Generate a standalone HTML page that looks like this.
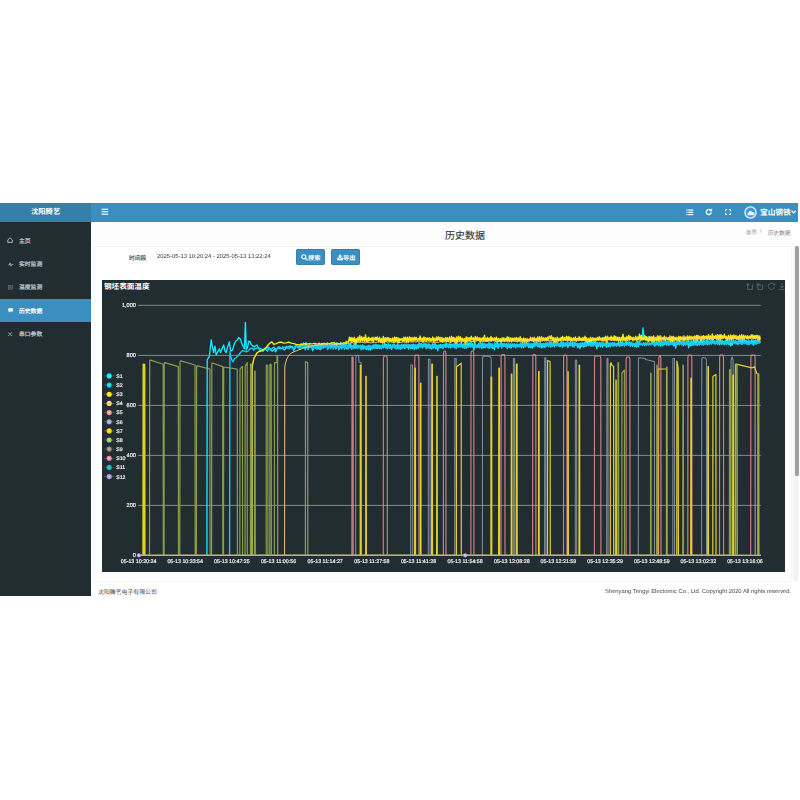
<!DOCTYPE html><html lang="zh"><head><meta charset="utf-8"><title>历史数据</title><style>
*{box-sizing:border-box}
html,body{margin:0;padding:0}
body{width:800px;height:800px;background:#fff;overflow:hidden;position:relative;font-family:"Liberation Sans",sans-serif;color:#333;text-rendering:geometricPrecision}
.abs{position:absolute}
.cj{position:absolute;overflow:visible;line-height:1}
.cj svg{position:absolute;left:0;top:0;overflow:visible}
.cj text{font-family:"Liberation Sans","Noto Sans CJK SC",sans-serif;text-rendering:geometricPrecision}
.logo{left:0;top:203.1px;width:90.8px;height:18.7px;background:#367fa9}
.nav{left:90.8px;top:203.1px;width:707.6px;height:18.7px;background:#3b8ec0}
.side{left:0;top:221.8px;width:90.8px;height:374.4px;background:#222d32}
.act{left:0;top:299.1px;width:90.8px;height:22.6px;background:#3b8ec0}
.content{left:90.8px;top:221.8px;width:709.2px;height:374.4px;background:#fff}
.hdr{left:91px;top:221.8px;width:701px;height:22.2px;background:#fdfdfd}
.box{left:93.5px;top:245.6px;width:698.9px;height:336px;background:#fff;border:1px solid #f7f5f4;border-radius:1px}
.chart{left:102px;top:280px;width:683px;height:292px;background:#222d32}
.btn{top:249.4px;height:15.8px;width:28.7px;background:#3b8ec0;border:0.5px solid #367fa9;border-radius:1.3px}
.lbl{will-change:transform;font-size:5.85px;line-height:8px;white-space:nowrap;color:#333}
.track{left:792px;top:245.6px;width:6.4px;height:335.6px;background:linear-gradient(90deg,#fff,#f3f3f3 40%,#f1f1f1)}
.thumb{left:795.3px;top:246.4px;width:3.3px;height:229.6px;background:#a0a0a0;border-radius:1.6px}
.foot{will-change:transform;font-size:5.83px;line-height:8px;color:#444;white-space:nowrap}
.ax{text-rendering:geometricPrecision;font-size:5.2px;fill:#f4f4f4;stroke:#f4f4f4;stroke-width:0.18px;font-family:"Liberation Sans",sans-serif}
.axx{font-size:5.3px}
.axy{font-size:5.6px}
</style></head><body>
<div class="abs logo"></div><div class="abs nav"></div>
<div class="cj" style="left:30.7px;top:207.3px;width:29.2px;height:9.5px;font-size:7.3px"><svg width="29.2" height="9.5" viewBox="0 0 29.2 9.5"><text x="0" y="7.4" font-size="7.3" font-weight="bold" fill="#fff">沈阳腾艺</text></svg></div>
<svg class="abs" style="left:101px;top:208px" width="8" height="8" viewBox="0 0 8 8"><g fill="#fff"><rect x="0.6" y="0.7" width="6.6" height="1.15"/><rect x="0.6" y="3.15" width="6.6" height="1.15"/><rect x="0.6" y="5.6" width="6.6" height="1.15"/></g></svg>
<svg class="abs" style="left:685.6px;top:208.6px" width="8" height="7" viewBox="0 0 8 7"><g fill="#fff"><rect x="0.3" y="0.4" width="1.2" height="1.2"/><rect x="2.2" y="0.4" width="5" height="1.2"/><rect x="0.3" y="2.7" width="1.2" height="1.2"/><rect x="2.2" y="2.7" width="5" height="1.2"/><rect x="0.3" y="5" width="1.2" height="1.2"/><rect x="2.2" y="5" width="5" height="1.2"/></g></svg>
<svg class="abs" style="left:705px;top:208.4px" width="8" height="8" viewBox="0 0 8 8"><path d="M6.3 4.3A2.5 2.5 0 1 1 5.4 2.1" fill="none" stroke="#fff" stroke-width="1.35"/><path d="M7.1 0.3V3.3H4.1Z" fill="#fff"/></svg>
<svg class="abs" style="left:724.9px;top:208.9px" width="6.2" height="6.2" viewBox="0 0 7 7"><g fill="#fff"><path d="M0.2 0.2H3L0.2 3Z"/><path d="M6.8 0.2V3L4 0.2Z"/><path d="M0.2 6.8V4L3 6.8Z"/><path d="M6.8 6.8H4L6.8 4Z"/></g></svg>
<svg class="abs" style="left:743.7px;top:205.5px" width="13" height="13" viewBox="0 0 13 13"><circle cx="6.5" cy="6.5" r="6.2" fill="#eaf4fb"/><circle cx="6.5" cy="6.5" r="4.9" fill="#3f9be0"/><path d="M4.3 9.3a1.4 1.4 0 0 1 .2-2.7a1.9 1.9 0 0 1 3.6-.4a1.6 1.6 0 0 1 1.3 3.1Z" fill="#fff"/><rect x="5.6" y="7.6" width="2" height="0.7" rx="0.35" fill="#8cc4ee"/></svg>
<div class="cj" style="left:759.6px;top:206.7px;width:30.8px;height:10px;font-size:7.7px"><svg width="30.8" height="10" viewBox="0 0 30.8 10"><text x="0" y="7.8" font-size="7.7" font-weight="bold" fill="#fff">宝山钢铁</text></svg></div>
<svg class="abs" style="left:791.3px;top:210px" width="5.4" height="4" viewBox="0 0 5.4 4"><path d="M0.5 0.6L2.7 2.9L4.9 0.6" fill="none" stroke="#fff" stroke-width="1.15"/></svg>
<div class="abs side"></div><div class="abs act"></div>
<svg class="abs" style="left:7.4px;top:237.2px" width="6.2" height="6.2" viewBox="0 0 6.2 6.2"><path d="M0.8 2.9L3.1 0.8L5.4 2.9V5.4H0.8Z" fill="none" stroke="#b8c7ce" stroke-width="0.9" stroke-linejoin="round"/></svg>
<svg class="abs" style="left:8.2px;top:261.6px" width="5.4" height="5" viewBox="0 0 5.4 5"><path d="M0.2 3H1.3L2.1 0.9L3 4.2L3.7 2.4H5.2" fill="none" stroke="#b8c7ce" stroke-width="0.7"/></svg>
<svg class="abs" style="left:7.8px;top:285px" width="5" height="4.6" viewBox="0 0 5 4.6"><g fill="none" stroke="#6f8089" stroke-width="0.55"><rect x="0.4" y="0.4" width="4.2" height="3.8"/><path d="M0.4 1.7H4.6M0.4 3H4.6M1.9 1.7V4.2"/></g></svg>
<svg class="abs" style="left:7.9px;top:308.4px" width="5.6" height="4.6" viewBox="0 0 5.6 4.6"><path d="M0.9 0.3H4.7a0.7 0.7 0 0 1 .7 .7V2.7a0.7 0.7 0 0 1 -.7 .7H2.3L1.2 4.4V3.4H0.9a0.7 0.7 0 0 1 -.7 -.7V1a0.7 0.7 0 0 1 .7 -.7Z" fill="#fff"/></svg>
<svg class="abs" style="left:8.4px;top:331.6px" width="4.6" height="4.4" viewBox="0 0 4.6 4.4"><path d="M0.2 0.9H1.1L3 3.5H4.3M0.2 3.5H1.1L3 0.9H4.3" fill="none" stroke="#b8c7ce" stroke-width="0.6"/></svg>
<div class="cj" style="left:19px;top:236.5px;width:11.7px;height:7.6px;font-size:5.8px"><svg width="11.7" height="7.6" viewBox="0 0 11.7 7.6"><text x="0" y="5.9" font-size="5.8" fill="#b8c7ce" stroke="#b8c7ce" stroke-width="0.22">主页</text></svg></div>
<div class="cj" style="left:19px;top:260px;width:23.4px;height:7.6px;font-size:5.8px"><svg width="23.4" height="7.6" viewBox="0 0 23.4 7.6"><text x="0" y="5.9" font-size="5.8" fill="#b8c7ce" stroke="#b8c7ce" stroke-width="0.22">实时监测</text></svg></div>
<div class="cj" style="left:19px;top:283.4px;width:23.4px;height:7.6px;font-size:5.8px"><svg width="23.4" height="7.6" viewBox="0 0 23.4 7.6"><text x="0" y="5.9" font-size="5.8" fill="#b8c7ce" stroke="#b8c7ce" stroke-width="0.22">温度监测</text></svg></div>
<div class="cj" style="left:19px;top:307px;width:23.4px;height:7.6px;font-size:5.8px"><svg width="23.4" height="7.6" viewBox="0 0 23.4 7.6"><text x="0" y="5.9" font-size="5.8" fill="#fff" stroke="#fff" stroke-width="0.22">历史数据</text></svg></div>
<div class="cj" style="left:19px;top:330.2px;width:23.4px;height:7.6px;font-size:5.8px"><svg width="23.4" height="7.6" viewBox="0 0 23.4 7.6"><text x="0" y="5.9" font-size="5.8" fill="#b8c7ce" stroke="#b8c7ce" stroke-width="0.22">串口参数</text></svg></div>
<div class="abs content"></div><div class="abs hdr"></div>
<div class="cj" style="left:445.1px;top:228.5px;width:40px;height:13px;font-size:10px"><svg width="40" height="13" viewBox="0 0 40 13"><text x="0" y="10.1" font-size="10" fill="#333" stroke="#333" stroke-width="0.12">历史数据</text></svg></div>
<div class="cj" style="left:745.8px;top:228.6px;width:10.8px;height:7px;font-size:5.4px"><svg width="10.8" height="7" viewBox="0 0 10.8 7"><text x="0" y="5.5" font-size="5.4" fill="#999">首页</text></svg></div>
<div class="abs" style="left:760.4px;top:228.3px;font-size:5.4px;line-height:8px;color:#aaa;will-change:transform">/</div>
<div class="cj" style="left:767.6px;top:228.5px;width:22.4px;height:7.3px;font-size:5.6px"><svg width="22.4" height="7.3" viewBox="0 0 22.4 7.3"><text x="0" y="5.7" font-size="5.6" fill="#777">历史数据</text></svg></div>
<div class="abs box"></div>
<div class="cj" style="left:128.5px;top:253.6px;width:17.5px;height:7.6px;font-size:5.8px"><svg width="17.5" height="7.6" viewBox="0 0 17.5 7.6"><text x="0" y="5.9" font-size="5.8" fill="#333" stroke="#333" stroke-width="0.1">时间段</text></svg></div>
<div class="abs lbl" style="left:156.5px;top:253.4px">2025-05-13 10:20:24 - 2025-05-13 13:22:24</div>
<div class="abs btn" style="left:295.9px"></div><div class="abs btn" style="left:331.1px"></div>
<svg class="abs" style="left:300.8px;top:253.8px" width="7" height="7" viewBox="0 0 7 7"><circle cx="2.8" cy="2.8" r="2" fill="none" stroke="#fff" stroke-width="1.15"/><path d="M4.3 4.3L6.4 6.4" stroke="#fff" stroke-width="1.3"/></svg>
<div class="cj" style="left:308px;top:253.5px;width:12.4px;height:8.1px;font-size:6.2px"><svg width="12.4" height="8.1" viewBox="0 0 12.4 8.1"><text x="0" y="6.3" font-size="6.2" font-weight="bold" fill="#fff">搜索</text></svg></div>
<svg class="abs" style="left:336.8px;top:254.2px" width="6.4" height="6.6" viewBox="0 0 6.4 6.6"><path d="M1.3 2.6L3.2 0.3L5.1 2.6H4.1V4H2.3V2.6Z" fill="#fff"/><path d="M0.3 3.6H1.7V4.6H4.7V3.6H6.1V6.2H0.3Z" fill="#fff"/></svg>
<div class="cj" style="left:343.4px;top:253.5px;width:12.4px;height:8.1px;font-size:6.2px"><svg width="12.4" height="8.1" viewBox="0 0 12.4 8.1"><text x="0" y="6.3" font-size="6.2" font-weight="bold" fill="#fff">导出</text></svg></div>
<div class="abs track"></div><div class="abs thumb"></div>
<div class="abs chart"></div>
<div class="cj" style="left:103.5px;top:280.6px;width:45.6px;height:9.9px;font-size:7.6px"><svg width="45.6" height="9.9" viewBox="0 0 45.6 9.9"><text x="0" y="7.7" font-size="7.6" font-weight="bold" fill="#fff">钢坯表面温度</text></svg></div>
<svg class="abs" style="left:102px;top:280px;will-change:transform" width="683" height="292" viewBox="102 280 683 292"><path d="M138.2 305.3H760.8" stroke="#a2a9ac" stroke-width="0.75"/><path d="M138.2 355.4H760.8" stroke="#a2a9ac" stroke-width="0.75"/><path d="M138.2 405.4H760.8" stroke="#a2a9ac" stroke-width="0.75"/><path d="M138.2 455.4H760.8" stroke="#a2a9ac" stroke-width="0.75"/><path d="M138.2 505.4H760.8" stroke="#a2a9ac" stroke-width="0.75"/><path d="M138.2 555.4H760.8" stroke="#a2a9ac" stroke-width="0.75"/><text class="ax axy" x="135.9" y="307.2" text-anchor="end">1,000</text><text class="ax axy" x="135.9" y="357.3" text-anchor="end">800</text><text class="ax axy" x="135.9" y="407.3" text-anchor="end">600</text><text class="ax axy" x="135.9" y="457.3" text-anchor="end">400</text><text class="ax axy" x="135.9" y="507.3" text-anchor="end">200</text><text class="ax axy" x="135.9" y="557.3" text-anchor="end">0</text><text class="ax axx" x="138.6" y="563.3" text-anchor="middle">05-13 10:20:24</text><text class="ax axx" x="185.2" y="563.3" text-anchor="middle">05-13 10:33:54</text><text class="ax axx" x="231.9" y="563.3" text-anchor="middle">05-13 10:47:25</text><text class="ax axx" x="278.5" y="563.3" text-anchor="middle">05-13 11:00:56</text><text class="ax axx" x="325.2" y="563.3" text-anchor="middle">05-13 11:14:27</text><text class="ax axx" x="371.9" y="563.3" text-anchor="middle">05-13 11:27:58</text><text class="ax axx" x="418.5" y="563.3" text-anchor="middle">05-13 11:41:28</text><text class="ax axx" x="465.1" y="563.3" text-anchor="middle">05-13 11:54:58</text><text class="ax axx" x="511.8" y="563.3" text-anchor="middle">05-13 12:08:28</text><text class="ax axx" x="558.4" y="563.3" text-anchor="middle">05-13 12:21:59</text><text class="ax axx" x="605.1" y="563.3" text-anchor="middle">05-13 12:35:29</text><text class="ax axx" x="651.8" y="563.3" text-anchor="middle">05-13 12:48:59</text><text class="ax axx" x="698.4" y="563.3" text-anchor="middle">05-13 13:02:32</text><text class="ax axx" x="745" y="563.3" text-anchor="middle">05-13 13:16:06</text><polyline fill="none" stroke="#18E6FF" stroke-width="1.35" stroke-linejoin="round" points="206.9,555.4 207.2,360 208.3,358 209.4,356.5 211.2,339.8 212.5,347.5 213.7,352.5 215,346.2 216.2,355 218.1,351.2 219.4,348.7 220.6,352.5 222.5,347.5 223.7,345 225,351.2 226.2,352.5 227.5,347.5 229.4,341.9 230.6,351.2 232.5,350 234.4,343.7 235.6,341.2 237.5,340 238.7,337.5 240.6,339.4 241.9,343.7 243.1,346.2 244.4,348.7 245.4,322.3 246.3,350 247.5,347.5 248.7,341.2 250,341.9 251.2,344.4 253.1,346.2 255,346.2 256.9,345 258.7,348.7 260,351.2 261.2,349 262.1,350.3 263,351.3 263.9,349.9 264.8,348.5 265.7,349.4 266.6,350.2 267.5,351.1 268.4,348.7 269.3,347.8 270.2,349.8 271.1,350 272,351.2 272.9,350.9 273.8,349.6 274.7,348.9 275.6,351.9 276.5,349.5 277.4,348.2 278.3,347.3 279.2,348.4 280.1,348.8 281,348.3 281.9,348.4 282.8,348.7 283.7,349.3 284.6,349.8 285.5,348.9 286.4,346.3 287.3,348.2 288.2,346.3 289.1,347.1 290,345.8 290.9,346.9 291.8,346.3 292.7,347.2 293.6,350.8 294.5,348 295.4,348.1 296.3,345.6 297.2,345.9 298.1,347 299,346.4 300,347.1 301,343.6 302.1,346.4 303.5,343 304.7,347.7 306,342.6 307.4,348.8 308.7,345.1 309.8,347.6 311.3,345.8 312.6,350.7 314,345.9 315.5,348.3 316.5,345.7 318.1,349.1 319.4,345.1 320.9,349.7 322.1,343.5 323.2,348.2 324.3,343.3 325.6,347.4 327,343.1 328.5,348.4 329.8,343.8 331,347.3 332,343.3 333.3,349.1 334.5,342.2 335.7,348.8 337.2,342.8 338.8,349.8 339.8,346.1 341.1,348 342.4,343.8 343.7,347.4 345.2,343.1 346.3,348.5 348,348.6 349,344.1 349.9,347 350.7,343.2 351.5,349 352.3,345.9 353.1,347.7 354,344.4 355,348.3 356.2,343.6 357.2,348.9 358.2,345.1 359.1,348.1 360.2,345.2 361.2,349.8 361.9,345.9 363,349.3 364.1,346.3 365,348.7 365.8,346.2 366.7,349.7 367.5,346.2 368.5,349.7 369.6,347.2 370.3,350 371.2,346.8 372.2,349 373.3,344.8 374.1,348.4 375.2,344.3 376,348.5 376.9,344.7 377.7,348.3 378.7,345 379.6,348.5 380.5,346.4 381.4,348.7 382.5,344.7 383.5,347.8 384.6,342.1 385.6,347.9 386.3,344.5 387.4,348.9 388.3,343.7 389.4,348.2 390.4,344.3 391.4,349.3 392.5,345 393.4,347 394.2,344.2 395.1,348.3 395.9,345.1 396.9,348.8 397.9,343.5 398.9,348.9 400,345 400.8,349.4 401.9,344.2 402.7,348 403.7,344.8 404.8,348.6 405.9,345.9 406.8,347.4 407.8,346.1 408.6,349.1 409.6,344.7 410.8,348.6 411.5,344.7 412.3,348.7 413.3,344.2 414.4,349.5 415.2,344.8 416.3,348.9 417.4,344.7 418.3,348.5 419.1,343 420.2,346.8 421.3,343.7 422.3,348.1 423.3,344 424.2,346 425.1,343.1 426.1,348.7 427,343.9 428,348.2 428.9,343.8 430,348.5 431,345 431.9,349.1 432.8,343.6 433.8,348 434.9,343.2 435.8,348.7 436.8,344.9 437.8,350.7 438.6,345 439.5,347 440.3,344.4 441.1,347.6 442.1,344.7 443.1,348.3 444.2,344.1 445.3,347.2 446.1,342.6 446.9,347 448,344.4 448.8,346.6 449.8,343.3 450.6,347.4 451.4,344.5 452.2,347.2 453,343.9 454.2,346.4 455.1,343 456.1,348.7 457.1,342.6 458,346.5 459,344.2 460,347.1 461,342.6 462.1,347 463.2,343.8 464.3,347.8 465.3,343.9 466.2,347.5 467.1,342.5 468,347.1 469.1,342.7 470.2,347.2 471,342.3 471.8,346.5 472.8,343.4 473.8,350.1 474.8,341.6 475.9,347.1 476.9,345.2 477.8,347.2 478.8,343.5 479.8,347.8 480.7,343.2 481.8,348.5 482.6,342.7 483.5,347.6 484.5,343.8 485.6,347.6 486.4,344.4 487.2,346.8 488.2,343.5 489.2,348.3 490,343.2 491,347.9 492,343.6 492.8,348.5 493.6,345.6 494.5,349.6 495.3,343.8 496.3,346.9 497.3,341.5 498.1,348.4 499.1,344.1 500,346.4 501,341.5 501.9,345.9 502.9,343.4 503.8,346.6 504.5,343.7 505.6,346.7 506.5,344.3 507.4,348.7 508.5,344 509.4,347.4 510.3,344 511.2,348.2 512.3,344 513.4,346.9 514.3,343.7 515.3,347.6 516.1,344.5 517.2,346.9 518.2,344.6 519.3,346.9 520.4,342.9 521.4,347.8 522.4,342.4 523.5,347.8 524.5,342.1 525.4,346.7 526.3,343.4 527.2,345.3 528,343 528.8,347.6 529.6,344.5 530.5,347.6 531.3,344.5 532.3,348.1 533.2,343.1 534.1,346.8 534.9,341.9 535.8,345.8 536.8,342.2 537.7,346.4 538.5,343.4 539.4,347 540.3,342.6 541.3,347.8 542.1,343.7 542.9,347.6 544,343.3 544.9,347.5 545.9,342.9 547,345.7 547.9,342.6 548.9,346.9 550,341.5 550.9,347.1 551.7,341.9 552.5,346.2 553.4,342.9 554.4,346.8 555.5,342.7 556.4,345.9 557.4,342.3 558.3,345.8 559.1,343.3 559.9,346.6 561,342 561.9,346.2 563,342 564,346.3 564.8,343.2 565.8,346.1 566.9,342.5 567.9,347.7 568.9,342.5 570,345.9 571,342.3 572.1,345.5 573,341.9 573.9,347.1 575,342.2 576.1,345.5 577.1,343.6 577.9,347.8 578.9,343.4 580,348.7 580.8,342.9 581.7,346.4 582.7,342.8 583.5,347.1 584.4,342.4 585.4,346 586.5,341 587.4,345.1 588.4,340.3 589.1,345.4 590.2,341.1 591,344.9 591.8,341.1 592.6,345.7 593.7,340.9 594.8,344.7 595.8,341 596.8,348.8 597.7,342.8 598.5,346.3 599.5,342.7 600.6,346.9 601.5,343.1 602.6,347.1 603.6,343.1 604.7,345.6 605.5,343.6 606.3,347.4 607.4,341.7 608.2,346.8 609,343.3 610.1,346.9 610.9,343 611.9,345.3 612.8,342.7 613.6,345.6 614.4,342.6 615.3,345.2 616.4,343.4 617.4,345.5 618.4,341.9 619.4,346 620.4,341.8 621.3,345.8 622.2,341.1 623.3,344.9 624.2,343 625.2,344.5 626,341.2 626.9,344.1 627.9,341.7 628.8,344.8 629.8,342.1 630.7,345.6 631.6,342.3 632.6,346.3 633.7,343.7 634.8,346.4 635.6,343.1 636.4,347 637.2,341.2 638.2,346 639.1,340.9 640,342.1 641,336.8 642.1,339.3 643,328 644,337.1 644.8,335.5 645.8,340.2 646.9,336.8 647.7,340.5 648.5,336.7 649.6,340 650.7,337.9 651.7,342.7 652.5,339.8 653.6,344.8 654.4,342 655.1,345 656.2,341.9 657.2,344.8 658.1,341.9 658.9,345.6 659.7,341.5 660.8,346 661.6,341.4 662.7,345.9 663.7,340.6 664.6,344.6 665.5,341.7 666.5,345 667.3,341.5 668.3,345.1 669.1,340.4 670,344.5 670.8,341.2 671.8,344 672.8,340.4 673.7,345.8 674.6,341.7 675.7,348.2 676.5,341.3 677.4,344.6 678.5,341 679.4,344.9 680.4,341 681.5,344.9 682.3,340.9 683.4,344.8 684.3,341.4 685.2,344.6 686.1,341.7 686.9,344 687.7,341.2 688.6,347.7 689.5,341.8 690.4,345.8 691.3,340.7 692.3,345.1 693.4,340.1 694.3,344.6 695.3,339.5 696.1,344.4 697.2,337 698.3,343.6 699.4,341.2 700.2,343.6 701.2,339.4 702.1,344.6 703.2,339.5 704,344.5 704.9,340.8 705.7,344 706.5,340 707.4,344.8 708.2,341 709.3,344.2 710.4,340.2 711.4,344.1 712.5,339.4 713.5,343.1 714.3,341.1 715.4,342.9 716.5,341.6 717.6,344.2 718.6,339.6 719.4,344.7 720.5,341.4 721.4,344.3 722.3,340.1 723.2,343.5 724.2,341.1 725.2,343.3 726.1,339.1 727,343.9 727.9,339.4 728.9,344.6 729.7,341.6 730.6,345.9 731.4,341.8 732.2,345.2 733.2,340 734.2,343.3 735.2,340.4 736.1,344.1 737.1,341.3 738,344.7 739,338.8 739.9,343.4 740.7,337.9 741.5,344.1 742.6,339.1 743.4,342.9 744.3,339.3 745.1,342.3 746.2,340 747.2,344.2 748.3,340.6 749.1,344.7 749.9,340.9 751,342.6 751.8,339.1 752.9,344.5 753.8,340.5 754.6,342.9 755.6,339.6 756.5,343.5 757.6,339.5 758.5,342.8 759.4,339.5 760.3,342.8"/><polyline fill="none" stroke="#18C8F0" stroke-width="1.35" stroke-linejoin="round" points="229.6,555.4 229.9,352 230.6,356.2 231.9,360 233.1,361.9 234.4,358.7 236.2,357.5 238.7,355 240.6,352.5 242.5,350.6 244.4,351.2 246.2,351.9 248.1,351.2 250,348.7 252.5,348.1 253.7,350.5 254.6,348 255.5,348.6 256.4,348.3 257.3,347.6 258.2,347.7 259.1,347.8 260,348.3 260.9,348.9 261.8,349.8 262.7,349.2 263.6,350 264.5,349.6 265.4,349.1 266.3,348.7 267.2,347.8 268.1,347 269,348.3 269.9,348.6 270.8,349.1 271.7,349.2 272.6,347.6 273.5,347.7 274.4,347.2 275.3,349.1 276.2,348.6 277.1,348.6 278,347.5 278.9,346.8 279.8,347.2 280.7,347.8 281.6,348.5 282.5,346.7 283.4,347.9 284.3,347.1 285.2,347.1 286.1,347.3 287,347.2 287.9,348 288.8,348.6 289.7,348.2 290.6,347.2 291.5,347.8 292.4,347.9 293.3,348.3 294.2,347.8 295.1,345.8 296,346 296.9,346.4 297.8,347.7 298.7,347.1 300,349.4 301.2,345.6 302.6,348.2 304.1,346.4 305.3,350 307,343.9 308.3,349.6 309.5,344.6 311.1,347.7 312.3,345.7 313.6,349.3 315.1,344 316.7,349.1 318.3,344.6 319.6,349.3 320.8,345.7 322.4,347.9 323.7,344.2 325.1,347.8 326.5,344.6 327.6,349.7 329.1,345.5 330.8,348.8 332.4,345.3 333.7,348 335.2,345 336.4,348.3 337.5,345.6 339.2,348.1 340.6,342.4 341.8,349.2 343.2,343.9 344.5,349.3 346,341.1 348,349 349,345.7 349.9,347.9 350.7,346.7 351.7,348.8 352.8,345.5 353.8,348.9 354.9,345.6 355.7,348 356.7,345.9 357.7,347.6 358.5,345.7 359.6,347.5 360.7,345.5 361.6,348.7 362.6,344.6 363.8,347.6 364.6,345.9 365.8,349.1 366.9,345.9 367.8,348.2 369,345.1 369.8,348.2 370.7,345.6 371.7,348.2 372.8,345.9 373.9,347.8 375,345.3 376.2,348 377.3,346.3 378.1,347.7 379.1,345.4 379.9,347.1 380.8,345.2 381.8,348.2 382.9,345.3 383.9,347.2 385,345.9 386.1,347.9 387,344.7 388,347.4 388.9,345.6 389.7,347.8 390.7,346.4 391.7,349 392.9,344.4 394,347.6 394.9,345.4 395.9,348.8 396.8,345.1 397.7,348.1 398.7,345.7 399.8,348.8 400.6,346.2 401.5,348 402.6,345.5 403.7,347.6 404.9,344 405.9,346.7 406.9,343.9 407.8,346.7 409,344.4 409.9,346.9 411,344.9 412,347.5 413.2,344.4 414,348 414.8,344.8 415.9,346.8 417,344.9 418,346.1 418.8,344.1 419.9,347 420.8,343.4 421.7,346.8 422.9,344.7 423.9,347.2 425,344.9 426.2,346.8 427.3,344.9 428.4,347.6 429.4,344.4 430.5,348 431.4,345.5 432.3,347.9 433.3,344.8 434.3,347.6 435.4,345 436.5,348.5 437.6,346.1 438.7,348.4 439.8,345.8 440.9,347.9 442,344.6 443.1,348.5 443.9,344.8 444.8,346.9 445.7,344.2 446.7,347.2 447.7,344 448.8,347.7 449.8,345.9 450.7,348.1 451.5,344.9 452.7,346.8 453.5,344.1 454.3,347.9 455.4,344.2 456.6,348.2 457.5,344.8 458.7,347.2 459.7,343.9 460.6,346 461.6,345 462.5,347.7 463.4,345.2 464.3,348 465.1,344.7 466,348.4 467.2,345.5 468.3,347.5 469.5,345.2 470.4,346.6 471.2,344.6 472.2,347.2 473.3,345.1 474.3,348.4 475.2,344.7 476.4,347.7 477.4,344.7 478.5,347.1 479.7,344 480.5,346.6 481.5,343.9 482.4,346.8 483.5,344.7 484.5,347.7 485.4,344 486.3,346.4 487.1,344.5 487.9,347.9 488.9,342.5 489.9,347.6 491,344.6 491.9,346.4 492.7,345.1 493.7,348.3 494.5,342.8 495.5,345.6 496.5,342.3 497.6,346.7 498.7,343.4 499.5,346.9 500.7,343.3 501.8,348.1 503,344.1 504.1,346.1 505,344.1 505.8,346.2 506.6,343.5 507.4,348.1 508.5,343.3 509.4,346.6 510.6,343.8 511.8,346.3 512.8,345.1 513.7,346.7 514.8,344.6 515.9,347.8 516.9,343.7 518.1,346.7 519.1,344.4 519.9,346.9 520.8,343.6 521.9,346 522.8,343.5 523.7,345.8 524.9,343.9 525.8,346.3 526.9,343.8 527.9,346.3 529,343.4 530.2,345.6 531,343.3 532,346.1 533,343.8 534.1,346.1 535.2,343.2 536.1,345.5 537,343.2 538.1,346.8 539.2,343.1 540,345.4 541,344 541.9,345.9 542.9,343.5 544,345.3 545.1,343.7 546.3,346.2 547.3,342.9 548.5,346.1 549.6,343.5 550.5,345.8 551.4,343.1 552.5,345.6 553.5,343 554.5,345.3 555.6,341.9 556.5,345.2 557.5,343.4 558.5,345.6 559.3,344 560.4,346.4 561.6,341.2 562.5,347.6 563.6,342.7 564.8,344.7 565.6,343 566.4,345.3 567.2,343 568.1,344.7 569.3,343.1 570.3,345.1 571.3,344 572.5,346.6 573.7,343.3 574.6,345.6 575.8,342.6 576.7,345.7 577.6,343.4 578.7,345.6 579.6,343.7 580.8,345.5 581.6,343.4 582.6,345.7 583.7,343.6 584.6,346.5 585.8,343.7 586.6,346.3 587.8,343.8 588.8,345.8 590,343.4 591.1,346.4 591.9,343.4 593.1,346.2 594.2,343.1 595.4,346.1 596.3,343.1 597.2,345.5 598.1,343.3 599,344.2 599.9,342.2 601.1,344.8 602.1,341.9 603,345 604,343.1 605.1,345.1 606,342.1 606.9,345.8 608,342.6 609.1,344.9 610.1,342.9 610.9,345.2 612.1,343.1 613,346.4 614,343.3 614.8,345.9 615.7,343.5 616.6,346.2 617.5,344.5 618.4,345.6 619.4,343.5 620.5,345.6 621.5,343.6 622.5,345.5 623.6,343.5 624.6,346 625.6,342.8 626.7,345.2 627.7,342.9 628.6,345.2 629.4,343.2 630.3,346.5 631.5,342.8 632.6,345.2 633.6,343.1 634.4,346 635.6,343 636.7,346 637.6,343.6 638.4,346.8 639.3,342.4 640.2,344.9 641.4,343.2 642.4,345.6 643.5,342.5 644.7,345.8 645.5,342.5 646.6,345.3 647.6,342.3 648.6,345.2 649.7,342.8 650.6,345.1 651.8,342.5 652.9,344.4 653.8,342.3 654.9,346.3 655.8,343.4 656.6,344.9 657.7,341.9 658.8,344.5 660,341.9 660.9,345.1 662,342.2 663,345 664,341.8 665,344 666,341 666.8,344 667.8,341.2 669,345.5 669.8,340.2 670.8,344.4 671.9,341.3 673,345 674.1,341.4 675.1,343.7 676.1,342.4 676.9,343.7 678,340.9 679.1,343.9 680.3,342.2 681.4,344.5 682.3,342.1 683.4,345.9 684.4,341.8 685.6,345.1 686.5,341.7 687.5,344.7 688.4,340.3 689.5,344.1 690.5,342.2 691.4,345.4 692.5,342.4 693.6,345.2 694.6,343.4 695.5,345 696.3,343.7 697.3,345.6 698.2,342.3 699.3,345 700.1,343.2 701.3,344.6 702.4,342.9 703.3,345.2 704.3,341.4 705.3,344 706.3,341.5 707.4,344 708.4,341.5 709.3,344.3 710.3,341.2 711.4,343.8 712.3,340.6 713.1,343.3 714.1,341.2 715,344.5 716.1,340.8 717,343.6 717.9,340.3 718.8,343.7 719.9,340.7 720.9,343.6 721.7,341.3 722.9,344.3 723.7,341.8 724.8,344.9 725.8,341.7 726.6,344.3 727.5,340.9 728.5,343.6 729.6,340.7 730.4,342.6 731.3,340.6 732.2,343 733.4,340.9 734.3,343.2 735.2,341.2 736.4,343 737.4,341.6 738.5,343.5 739.3,341.3 740.2,343.8 741.3,342 742.2,344.3 743.2,341.6 744.1,343.8 745.1,341.1 746.1,344 747.1,341.5 748.1,344.2 749,341.2 749.9,343.8 750.8,342.1 751.6,343.7 752.7,342.1 753.8,345.2 754.8,341.3 755.9,344.2 756.9,340.7 757.8,343.5 758.7,341 759.9,343.5"/><polyline fill="none" stroke="#FFE816" stroke-width="1.35" stroke-linejoin="round" points="252,555.4 252.2,368 252.6,364.5 253.9,358.3 255.7,355.1 257,352.8 258.7,351.7 261.2,351 263.7,349.4 266.2,347.5 268.1,345 270,343.1 271.9,341.9 273.7,344.4 276.2,343.7 278.7,342.5 281.2,342.2 283.7,343.1 286.2,342.8 288.7,342.2 291.2,343.1 293.7,343.7 296.2,344.4 300,345 301.2,344.5 302.4,344.3 303.6,343.8 304.8,343.7 306,344.3 307.2,343.9 308.4,343.8 309.6,343.7 310.8,343.8 312,343.9 313.2,343.7 314.4,343.3 315.6,343.6 316.8,344.1 318,343.8 319.2,343.2 320.4,344.5 321.6,343.6 322.8,343.6 324,343.4 325.2,343.7 326.4,343.7 327.6,343.1 328.8,343.8 330,343.7 331.2,343 332.4,342.9 333.6,342.8 334.8,343.6 336,343.4 337.2,343.4 338.4,343.6 339.6,343.8 340.8,343.4 342,343.3 343.2,343 344.4,343 345.6,342.9 346.8,341.8 348.4,342 349.4,337.2 350.3,341.2 351.1,337.4 352,342.1 352.7,338 353.7,341.6 354.4,337.3 355.3,344.1 356.2,338.6 357,342.3 358,337.1 359,341.5 359.8,335.6 360.7,341.3 361.7,336.6 362.7,341.1 363.7,337.5 364.6,341.5 365.5,334.8 366.3,341.7 367.1,338.1 367.9,342.1 368.7,337.2 369.4,340.5 370.3,338.3 371.2,341.1 372.2,337.3 373.2,342.2 374,337.5 375,340.1 375.8,337.1 376.7,340.2 377.5,336.9 378.6,341.7 379.6,337.3 380.5,342.4 381.5,338.5 382.5,342.9 383.3,336.4 384.3,342.7 385.2,337.7 386.3,341.4 387.1,337.4 388.1,340.9 388.8,337.7 389.7,341.7 390.7,338.4 391.7,341.3 392.7,337.8 393.6,342.7 394.6,337 395.5,341.3 396.3,337.4 397.2,341.8 398,337.6 399,342.5 399.8,338.4 400.9,340.5 401.9,338.5 402.9,341.5 403.7,337.1 404.4,341.2 405.4,337.1 406.4,342 407.3,337.1 408.4,342.4 409.3,336.8 410.3,340.6 411,337.4 412,341.3 413,337.5 414,340.8 414.8,337.1 415.6,340 416.4,337.5 417.4,340.9 418.4,338.4 419.2,340.3 420.1,335.9 421.1,340.7 422.1,337.9 423,342.1 423.9,337 424.7,340.4 425.6,337.6 426.4,341.4 427.3,337.9 428.4,340.3 429.2,337.7 430.2,341.1 431,338.4 431.9,340.7 432.8,337 433.8,342.2 434.6,338.1 435.7,340.9 436.6,337 437.4,340.7 438.4,336.8 439.4,340.3 440.2,337.5 441,341.9 442,337.3 442.8,342.3 443.9,338.1 444.8,341.6 445.8,337.4 446.7,341.5 447.5,337.6 448.5,341.2 449.6,336.8 450.7,342.4 451.6,336.3 452.5,341 453.4,337.4 454.3,341.7 455,337.8 456,343.4 456.8,336.8 457.6,341.5 458.7,336.2 459.6,340.4 460.5,336.9 461.6,342.5 462.4,338.1 463.4,341.2 464.4,338.4 465.2,344.1 466.2,336.8 467,342 467.8,337.4 468.9,340.5 469.6,337.6 470.5,341.2 471.3,336.2 472.2,339.7 473.3,337.9 474.2,341.8 475.2,336.5 476.3,340.3 477.2,337 478.2,340.6 479.1,337.6 480.1,342.3 480.9,337.9 481.7,340.6 482.8,337.7 483.6,340.7 484.5,335.1 485.2,341 486.1,338.1 486.9,341.5 487.6,337.3 488.5,340.6 489.4,338.2 490.1,341.2 491,336.4 491.8,341.1 492.7,338 493.7,340.4 494.6,337.8 495.4,340.5 496.4,337.1 497.4,341.4 498.3,338.3 499.3,340.7 500.3,338.6 501.1,341.9 502.1,337.8 502.9,341 503.8,337.6 504.6,341.5 505.6,338.4 506.4,341.1 507.2,336.8 507.9,341.7 508.7,337.2 509.7,341.6 510.8,337.7 511.5,342 512.6,338.2 513.6,340.9 514.3,337.8 515.3,340.4 516.4,337.4 517.3,341.8 518.2,338 519.2,341 520.2,336.7 521,340.8 522,338.6 522.9,342.4 523.7,337.9 524.5,341.1 525.3,338.7 526.3,342.7 527,338.5 528,341.6 529,339 529.8,341.1 530.7,337.1 531.6,340.9 532.6,337.9 533.4,341.6 534.2,337.2 535.1,341 536,338.5 536.9,341.7 537.6,336.9 538.6,341.6 539.5,336.8 540.4,341 541.5,336.6 542.5,340.5 543.5,337.6 544.6,340.9 545.4,337.6 546.4,340.9 547.4,337.2 548.1,340.3 549.2,336.1 550.2,339.1 551.3,335.7 552.3,340.5 553.2,337.3 554.1,342.6 555.1,337.6 556.1,342.2 557.2,337.1 558,341.5 559,338.1 560,340.7 561,337.5 561.9,340.5 562.6,336.3 563.6,340.1 564.5,337.4 565.4,340.2 566.5,336.3 567.4,341 568.2,336.5 568.9,340.3 569.9,337 570.7,341.4 571.5,338 572.6,340.9 573.5,337.8 574.5,340.2 575.5,337 576.3,341.4 577.3,338.3 578.2,340.6 579.1,336.6 580,340.3 580.9,337.9 581.9,340.7 582.9,337.4 583.9,340.4 584.9,336.2 586,341.7 586.7,337.6 587.7,341.9 588.7,338.4 589.8,341.5 590.6,337.3 591.4,341 592.5,337.6 593.2,340.3 594,338.1 594.7,340.6 595.5,338.3 596.3,340.3 597.3,337.5 598.2,340.5 599.2,336.6 600,339.7 600.7,338 601.7,340.2 602.5,337.6 603.2,341 604,337.5 604.9,340.8 605.6,336.3 606.6,342.4 607.5,336.1 608.2,339.9 609.3,337.5 610.1,340 611.1,336.2 611.8,340.3 612.6,337.4 613.5,339.7 614.2,335.8 615,340.6 615.8,336.4 616.7,340.6 617.7,337.1 618.5,341 619.3,337.3 620.3,341.1 621.3,337.3 622.2,340.5 623,334.1 624,340.8 624.9,337.5 626,341.1 626.8,336.3 627.8,340.4 628.8,335.3 629.6,340.2 630.4,336.5 631.1,339.2 632,337.4 632.8,340.8 633.6,337.5 634.7,340.1 635.7,336.3 636.7,340.7 637.7,337 638.5,339.5 639.5,334.1 640.4,339.8 641.3,335.5 642.1,340.3 642.9,337.1 643.8,339.6 644.7,335.8 645.5,339.9 646.3,336.7 647.2,340.8 648,337.8 648.9,341.6 649.9,336.5 650.8,340.5 651.8,336.6 652.9,341.7 653.6,335.9 654.6,341.2 655.7,337.5 656.6,340.8 657.4,336 658.3,340.9 659,336 659.9,340.9 660.7,335.9 661.7,340.3 662.6,337.6 663.5,339.5 664.3,336.1 665.3,340.8 666.3,337.1 667.3,339.7 668.3,337.7 669,340.1 669.9,336 670.8,341.4 671.8,336.4 672.6,341.4 673.5,336.3 674.3,340.4 675.2,337.5 676.1,340.3 676.9,337.3 677.9,340.5 678.8,336.3 679.5,341 680.4,336.7 681.3,339.8 682.2,337 683.3,340.5 684,335.8 684.8,340.4 685.6,337.1 686.5,340.1 687.3,335.9 688.2,340.1 689.2,336.1 690.1,339.9 690.9,336.1 691.8,339.2 692.9,336.8 693.7,340.2 694.5,336 695.5,338.9 696.5,335.4 697.2,340.5 698,335.4 699,339.1 699.8,336.1 700.8,340.8 701.7,336.2 702.6,339.1 703.5,335.6 704.4,339.4 705.2,336.2 706,338.6 706.8,335.9 707.6,339.8 708.5,334.6 709.5,339.4 710.4,336 711.3,339.3 712.3,334 713.1,339.9 713.9,336 714.8,338.2 715.8,335.1 716.7,339.8 717.6,334.6 718.3,339.2 719.4,334.9 720.1,340.7 721,334.4 721.8,338.8 722.8,335.8 723.6,338.1 724.4,334.1 725.4,338.3 726.4,336.3 727.3,340.2 728.4,335.3 729.5,339.7 730.5,335 731.3,340.2 732.3,335.4 733.1,339.2 733.9,334.9 734.9,338.5 735.9,335.4 736.9,339.5 737.8,336.3 738.5,339.3 739.5,335.1 740.6,338.7 741.6,334.7 742.6,339.5 743.6,335.1 744.4,338.5 745.4,335.8 746.5,338.4 747.5,335.6 748.4,339.1 749.3,336.1 750.3,338.4 751.2,334.8 752,337.8 752.8,335 753.6,338.9 754.5,335.7 755.3,338.1 756.1,335.3 757,338 757.7,335.5 758.7,340.1 759.6,335.9 760.3,339.6"/><polyline fill="none" stroke="#FFCC80" stroke-width="0.95" stroke-linejoin="round" points="284.6,555.4 284.8,368 285.2,364 285.7,362.5 286.9,358.7 288.7,355.6 291.2,353.1 293.7,351.9 296.9,350.6 300,349.4 304,347.8 310,346.2 316,345.2 322,344.6 323.2,344.1 324.8,344 326.4,344.4 328,343.7 329.6,344 331.2,343.5 332.8,344.3 334.4,344.3 336,344.6 337.6,344.1 339.2,344.2 340.8,344 342.4,343.8 344,343.9 345.6,343.5 347.2,343.4 348.8,343.4 350.4,343 352,342.5 353.6,343.2 355.2,342.8 356.8,342.4 358.4,342.5 360,342.3 361.6,342.3 363.2,342.3 364.8,343 366.4,342.6 368,342.5 369.6,342.6 371.2,343 372.8,342.5 374.4,342.2 376,342.9 377.6,342 379.2,342 380.8,342.3 382.4,342.9 384,342.1 385.6,341.4 387.2,342.1 388.8,341.9 390.4,341.9 392,342.2 393.6,342.2 395.2,342.2 396.8,342 398.4,342.4 400,342.6 401.6,342.2 403.2,341.9 404.8,342.2 406.4,342.2 408,341.7 409.6,341.7 411.2,342.1 412.8,341.9 414.4,341.8 416,341.9 417.6,341.8 419.2,341.8 420.8,341.2 422.4,342.1 424,341.9 425.6,341.6 427.2,342 428.8,341.9 430.4,341.8 432,342 433.6,342.5 435.2,342.1 436.8,342.3 438.4,342.5 440,341.6 441.6,341.5 443.2,341.8 444.8,341.1 446.4,341.3 448,341.8 449.6,341.9 451.2,341.8 452.8,341.1 454.4,342 456,341.8 457.6,341.8 459.2,341.7 460.8,341 462.4,340.8 464,340.8 465.6,341.7 467.2,341.2 468.8,341.2 470.4,341.2 472,341.4 473.6,341.5 475.2,341.4 476.8,341 478.4,340.2 480,340.9 481.6,341.2 483.2,341.6 484.8,341.3 486.4,341 488,341.2 489.6,340.7 491.2,340.7 492.8,340.7 494.4,341 496,341.7 497.6,341.5 499.2,341.5 500.8,341.3 502.4,341.2 504,340.9 505.6,340.9 507.2,340.2 508.8,340.3 510.4,340.4 512,341 513.6,341.1 515.2,341.3 516.8,341.5 518.4,341 520,341.2 521.6,341.5 523.2,341 524.8,341.2 526.4,340.9 528,340.3 529.6,340.6 531.2,340.4 532.8,340.6 534.4,340.5 536,340.7 537.6,340 539.2,341 540.8,341.2 542.4,340.7 544,340.3 545.6,340.5 547.2,340.7 548.8,340.7 550.4,340.7 552,340 553.6,340 555.2,340.7 556.8,340.6 558.4,340 560,340 561.6,339.8 563.2,339.9 564.8,340.5 566.4,340.3 568,340.7 569.6,340.5 571.2,339.9 572.8,339.9 574.4,340.8 576,340.2 577.6,339.9 579.2,340.4 580.8,340.3 582.4,340.2 584,340.6 585.6,339.7 587.2,340.1 588.8,339.7 590.4,339.5 592,339.6 593.6,340.2 595.2,340 596.8,339.4 598.4,339.4 600,340.2 601.6,340.3 603.2,339.7 604.8,340.5 606.4,339.9 608,339.5 609.6,339.6 611.2,340 612.8,340.3 614.4,340.2 616,339.7 617.6,339.5 619.2,339.1 620.8,339.4 622.4,339.3 624,339.5 625.6,339.1 627.2,339.2 628.8,339.1 630.4,339 632,338.9 633.6,338.9 635.2,338.9 636.8,339.4 638.4,339.4 640,338.9 641.6,339.3 643.2,339.4 644.8,339.7 646.4,339.3 648,339.2 649.6,339 651.2,339.1 652.8,339.3 654.4,339.2 656,339.1 657.6,339.2 659.2,339.1 660.8,339.1 662.4,338.8 664,339 665.6,338.7 667.2,338.6 668.8,338.9 670.4,339.5 672,339.4 673.6,339 675.2,338.9 676.8,339.1 678.4,339.3 680,339.3 681.6,338.9 683.2,338.8 684.8,338.6 686.4,338.6 688,338.4 689.6,338.5 691.2,337.9 692.8,338 694.4,338.5 696,338.2 697.6,338.6 699.2,338.1 700.8,338.3 702.4,338.5 704,338.2 705.6,338.1 707.2,339.1 708.8,338.4 710.4,338.2 712,338.1 713.6,338.3 715.2,338.3 716.8,338.6 718.4,338.7 720,338.3 721.6,338.2 723.2,337.8 724.8,337.6 726.4,337.8 728,338.3 729.6,338.3 731.2,338.5 732.8,338.6 734.4,338.2 736,338.8 737.6,338.2 739.2,338 740.8,337.9 742.4,338.4 744,338.1 745.6,337.8 747.2,338.1 748.8,338.4 750.4,338.1 752,337.9 753.6,338.3 755.2,338.4 756.8,338.4 758.4,337.8 760,338"/><polyline fill="none" stroke="#E58C8C" stroke-opacity="0.85" stroke-width="1.2" stroke-linejoin="round" points="138.2,555.4 351.9,555.4 352,357 353.1,357 353.2,555.4 383.3,555.4 383.4,358.5 383.8,356.6 384.3,356 386.3,356 386.8,356.6 387.2,358.5 387.3,555.4 414.6,555.4 414.8,357.5 415.1,355.6 415.6,355 418,355 418.5,355.6 418.9,357.5 419,555.4 443.4,555.4 443.5,353.5 443.9,351.6 444.4,351 445,351 445.5,351.6 445.9,353.5 446,555.4 470.9,555.4 471,353.5 471.4,351.6 471.9,351 472.9,351 473.4,351.6 473.8,353.5 473.9,555.4 501,555.4 501.1,357 501.5,355.1 502,354.5 504,354.5 504.5,355.1 504.9,357 505,555.4 532.6,555.4 532.8,357 533.1,355.1 533.6,354.5 534.9,354.5 535.4,355.1 535.8,357 535.9,555.4 563.5,555.4 563.6,357.5 564,355.6 564.5,355 566,355 566.5,355.6 566.9,357.5 567,555.4 594.4,555.4 594.5,358.5 594.9,356.6 595.4,356 599.9,356 600.4,356.6 600.8,358.5 600.9,555.4 626,555.4 626.1,359.5 626.5,357.6 627,357 629,357 629.5,357.6 629.9,359.5 630,555.4 658.6,555.4 658.8,358.5 659.1,356.6 659.6,356 660,356 660.5,356.6 660.9,358.5 661,555.4 687.8,555.4 687.9,357.5 688.3,355.6 688.8,355 690.9,355 691.4,355.6 691.8,357.5 691.9,555.4 719.5,555.4 719.6,357.5 720,355.6 720.5,355 722.6,355 723.1,355.6 723.5,357.5 723.6,555.4 750.7,555.4 750.9,357.5 751.2,355.6 751.7,355 754.2,355 754.7,355.6 755.1,357.5 755.2,555.4 760.8,555.4"/><polyline fill="none" stroke="#99A3BC" stroke-opacity="0.8" stroke-width="1.05" stroke-linejoin="round" points="138.2,555.4 355.7,555.4 355.8,358 356.3,355.8 357.2,355.2 358.6,355.6 359,362.3 361.2,362.5 361.4,555.4 410.7,555.4 410.8,365 412.6,365 412.7,555.4 428.3,555.4 428.4,359.3 430,359.3 430.1,555.4 454.7,555.4 454.8,358.5 456.2,358.5 456.4,555.4 482.4,555.4 482.5,358.5 483,356.6 484.2,356 489.5,356.4 490.8,357.4 491.2,358.8 491.3,555.4 513.3,555.4 513.4,358.5 514.6,358.5 514.7,555.4 544.6,555.4 544.8,357.7 545.9,357.7 546,555.4 575.3,555.4 575.4,360 576.6,360 576.7,555.4 606.7,555.4 606.9,358.5 608,358.5 608.1,555.4 638.3,555.4 638.4,358.4 639.2,357.7 645.5,358.6 645.8,359.6 654,361.4 654.4,361.7 654.5,555.4 672.8,555.4 672.9,358.5 674.5,358.5 674.6,555.4 701.6,555.4 701.8,359 702.2,357.9 703.2,357.6 705.6,358 706.4,359.5 706.5,555.4 731,555.4 731.1,360 732,356.9 732.3,356.9 733.1,360 733.2,555.4 760.8,555.4"/><polyline fill="none" stroke="#E2D028" stroke-width="1.2" stroke-linejoin="round" points="138.2,555.4 142.9,555.4 143.1,364 143.5,364 143.7,555.4 144.2,555.4 144.3,364.2 144.8,364.4 145,555.4 360.2,555.4 360.3,365 360.9,365 361,555.4 365.7,555.4 365.8,376.4 366.2,376.4 366.4,555.4 414.7,555.4 414.8,368 415.4,368 415.5,555.4 420.3,555.4 420.4,383 420.9,383 421,555.4 431.6,555.4 431.8,364 432.4,364 432.5,555.4 436.6,555.4 436.8,376.4 437.2,376.4 437.3,555.4 456.4,555.4 456.5,366.8 461.2,363.2 461.3,555.4 490.9,555.4 491,377 491.7,377 491.8,555.4 498.6,555.4 498.8,368 499.4,368 499.5,555.4 511.2,555.4 511.3,374 511.8,374 511.9,555.4 516.3,555.4 516.4,364 517.1,364 517.2,555.4 538.5,555.4 538.6,371.5 539.1,371.5 539.2,555.4 547.5,555.4 547.6,360.5 550.1,361.5 550.3,555.4 567.7,555.4 567.9,371.5 568.2,371.5 568.4,555.4 579,555.4 579.1,365 579.6,365 579.8,555.4 610.3,555.4 610.4,363.4 611.2,363 611.9,365.5 612.3,365.8 613.6,366.3 613.7,555.4 615.7,555.4 615.9,380 616.2,380 616.4,555.4 657.8,555.4 657.9,369 666.6,369 666.7,555.4 676.8,555.4 676.9,361 678.2,368 678.4,555.4 690.7,555.4 690.9,378 691.4,378 691.5,555.4 707.7,555.4 707.9,366.6 708.4,366.6 708.5,555.4 712.8,555.4 712.9,376.5 715.9,374.5 716,555.4 732.7,555.4 732.9,375.2 733.4,375.2 733.5,555.4 735.2,555.4 735.4,364.4 736.4,364.2 752,367.9 754.5,366.8 756.9,373.6 758.5,373.8 758.6,555.4 760.8,555.4"/><polyline fill="none" stroke="#94A64E" stroke-opacity="0.92" stroke-width="1.2" stroke-linejoin="round" points="138.2,555.4 149.5,555.4 149.7,360.6 150.5,360.1 163.2,364.2 163.3,555.4 164.1,555.4 164.2,363 165,362.6 178.3,366.6 178.5,555.4 179.8,555.4 180,361.4 180.8,360.9 195,365 195.2,555.4 196.4,555.4 196.6,366.2 197.3,365.8 209.9,369 210.1,555.4 211.6,555.4 211.8,363.4 212.6,363 222.7,366.6 222.8,555.4 223.5,555.4 223.7,367 237.2,369.2 237.4,555.4 239.8,555.4 240,369 242.4,366.4 242.6,555.4 245.1,555.4 245.2,366.4 247.2,362.6 247.3,555.4 250.4,555.4 250.6,364 251.8,364 252,555.4 254.5,555.4 254.7,371 255.2,371.5 255.3,555.4 266.2,555.4 266.3,365 267.8,365.3 267.9,555.4 269.8,555.4 269.9,364.2 271.2,364.5 271.4,555.4 274.4,555.4 274.5,362.6 276.9,362.6 277,355.8 277.6,355.8 277.7,555.4 305.4,555.4 305.5,361.7 307.7,362.5 307.8,555.4 617.9,555.4 618,362.5 618.6,362.5 618.7,555.4 621.8,555.4 621.9,373 624.4,370 624.5,555.4 650.5,555.4 650.6,373 651.1,373 651.2,555.4 656.6,555.4 656.8,365 657.2,365 657.4,555.4 666.4,555.4 666.5,367 667.1,367 667.2,555.4 682.7,555.4 682.9,365 683.4,365 683.5,555.4 729.4,555.4 729.5,369.5 730.5,369.5 730.6,555.4 735.9,555.4 736,364.8 737.2,364.6 737.4,555.4 757.6,555.4 757.8,373.8 758.8,374 758.9,555.4 760.8,555.4"/><polyline fill="none" stroke="#B6A4E8" stroke-width="1.0" stroke-linejoin="round" points="138.2,555.4 760.8,555.4"/><circle cx="138.9" cy="555.3" r="2.1" fill="#B5A0F0"/><circle cx="138.9" cy="555.3" r="0.9" fill="#E4DCFA"/><circle cx="465.2" cy="555.3" r="2.1" fill="#B5A0F0"/><circle cx="465.2" cy="555.3" r="0.9" fill="#E4DCFA"/><path d="M104.2 375.9H114.2" stroke="#18E6FF" stroke-width="0.6" opacity="0.55"/><circle cx="109.2" cy="375.9" r="2.55" fill="#18E6FF"/><circle cx="109.2" cy="375.9" r="1" fill="#fff" opacity="0.3"/><text class="ax" x="116.2" y="377.8">S1</text><path d="M104.2 385.1H114.2" stroke="#18C8F0" stroke-width="0.6" opacity="0.55"/><circle cx="109.2" cy="385.1" r="2.55" fill="#18C8F0"/><circle cx="109.2" cy="385.1" r="1" fill="#fff" opacity="0.3"/><text class="ax" x="116.2" y="387">S2</text><path d="M104.2 394.2H114.2" stroke="#FFE816" stroke-width="0.6" opacity="0.55"/><circle cx="109.2" cy="394.2" r="2.55" fill="#FFE816"/><circle cx="109.2" cy="394.2" r="1" fill="#fff" opacity="0.3"/><text class="ax" x="116.2" y="396.1">S3</text><path d="M104.2 403.4H114.2" stroke="#FFCC80" stroke-width="0.6" opacity="0.55"/><circle cx="109.2" cy="403.4" r="2.55" fill="#FFCC80"/><circle cx="109.2" cy="403.4" r="1" fill="#fff" opacity="0.3"/><text class="ax" x="116.2" y="405.3">S4</text><path d="M104.2 412.6H114.2" stroke="#EF9A9A" stroke-width="0.6" opacity="0.55"/><circle cx="109.2" cy="412.6" r="2.55" fill="#EF9A9A"/><circle cx="109.2" cy="412.6" r="1" fill="#fff" opacity="0.3"/><text class="ax" x="116.2" y="414.4">S5</text><path d="M104.2 421.7H114.2" stroke="#9FA8DA" stroke-width="0.6" opacity="0.55"/><circle cx="109.2" cy="421.7" r="2.55" fill="#9FA8DA"/><circle cx="109.2" cy="421.7" r="1" fill="#fff" opacity="0.3"/><text class="ax" x="116.2" y="423.6">S6</text><path d="M104.2 430.9H114.2" stroke="#F4D71C" stroke-width="0.6" opacity="0.55"/><circle cx="109.2" cy="430.9" r="2.55" fill="#F4D71C"/><circle cx="109.2" cy="430.9" r="1" fill="#fff" opacity="0.3"/><text class="ax" x="116.2" y="432.8">S7</text><path d="M104.2 440H114.2" stroke="#9CCC65" stroke-width="0.6" opacity="0.55"/><circle cx="109.2" cy="440" r="2.55" fill="#9CCC65"/><circle cx="109.2" cy="440" r="1" fill="#fff" opacity="0.3"/><text class="ax" x="116.2" y="441.9">S8</text><path d="M104.2 449.1H114.2" stroke="#A1887F" stroke-width="0.6" opacity="0.55"/><circle cx="109.2" cy="449.1" r="2.55" fill="#A1887F"/><circle cx="109.2" cy="449.1" r="1" fill="#fff" opacity="0.3"/><text class="ax" x="116.2" y="451">S9</text><path d="M104.2 458.3H114.2" stroke="#F48FB1" stroke-width="0.6" opacity="0.55"/><circle cx="109.2" cy="458.3" r="2.55" fill="#F48FB1"/><circle cx="109.2" cy="458.3" r="1" fill="#fff" opacity="0.3"/><text class="ax" x="116.2" y="460.2">S10</text><path d="M104.2 467.4H114.2" stroke="#1CB5B5" stroke-width="0.6" opacity="0.55"/><circle cx="109.2" cy="467.4" r="2.55" fill="#1CB5B5"/><circle cx="109.2" cy="467.4" r="1" fill="#fff" opacity="0.3"/><text class="ax" x="116.2" y="469.3">S11</text><path d="M104.2 476.6H114.2" stroke="#B39DDB" stroke-width="0.6" opacity="0.55"/><circle cx="109.2" cy="476.6" r="2.55" fill="#B39DDB"/><circle cx="109.2" cy="476.6" r="1" fill="#fff" opacity="0.3"/><text class="ax" x="116.2" y="478.5">S12</text><g fill="none" stroke="#6b7478" stroke-width="0.7"><path d="M747.6 284.4V289.4H752.4V284.4M746.4 284.4H749.2M748 283V286"/><path d="M757.8 284.4V289.4H762.6V284.4M760.2 286.4V284.4H757M758.2 283.2L757 284.4L758.2 285.6"/><path d="M774 284.6A3.1 3.1 0 1 0 774.3 287.4M774.6 283.4V285H773"/><path d="M782 283V287.6M780.2 286L782 287.8L783.8 286M779.4 289.4H784.6"/></g></svg>
<div class="cj" style="left:97.5px;top:587.8px;width:59.5px;height:7.7px;font-size:6px"><svg width="59.5" height="7.7" viewBox="0 0 59.5 7.7"><text x="0" y="6" font-size="5.9" fill="#4a4a4a">沈阳腾艺电子有限公司</text></svg></div>
<div class="abs foot" style="right:9.2px;top:587.6px">Shenyang Tengyi Electornic Co., Ltd. Copyright 2020 All rights reserved.</div>
</body></html>
